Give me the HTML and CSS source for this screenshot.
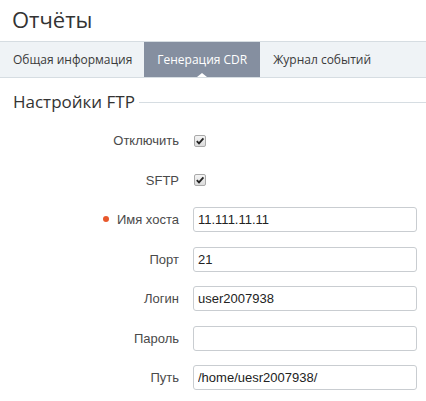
FILE: index.html
```html
<!DOCTYPE html>
<html lang="ru">
<head>
  <meta charset="UTF-8">
  <meta name="viewport" content="width=device-width, initial-scale=1.0">
  <title>Отчёты</title>
  <link rel="stylesheet" href="styles.css">
</head>
<body>
  <h1 class="page-title">Отчёты</h1>

  <nav class="tabs">
    <a href="#" class="tab">Общая информация</a>
    <a href="#" class="tab active">Генерация CDR</a>
    <a href="#" class="tab">Журнал событий</a>
  </nav>

  <section class="ftp">
    <div class="group-title">
      <span>Настройки FTP</span>
      <span class="rule"></span>
    </div>

    <form class="form">
      <label class="label">Отключить</label>
      <span class="check"><svg viewBox="0 0 12 12" width="12" height="12"><path d="M2.8 6.2 L5 8.4 L9.4 3.4" fill="none" stroke="#222" stroke-width="1.8"/></svg></span>

      <label class="label">SFTP</label>
      <span class="check"><svg viewBox="0 0 12 12" width="12" height="12"><path d="M2.8 6.2 L5 8.4 L9.4 3.4" fill="none" stroke="#222" stroke-width="1.8"/></svg></span>

      <label class="label required">Имя хоста</label>
      <input class="field" type="text" value="11.111.11.11">

      <label class="label">Порт</label>
      <input class="field" type="text" value="21">

      <label class="label">Логин</label>
      <input class="field" type="text" value="user2007938">

      <label class="label">Пароль</label>
      <input class="field" type="password" value="">

      <label class="label">Путь</label>
      <input class="field" type="text" value="/home/uesr2007938/">
    </form>
  </section>
</body>
</html>
```

FILE: styles.css
```css
:root {
  --text-color: #333;
  --tab-bg: #eff3f6;
  --tab-active: #858fa0;
  --line-color: #d6dde2;
  --input-border: #c9cdd1;
  --required: #e8582c;
}

* {
  margin: 0;
  padding: 0;
  box-sizing: border-box;
}

body {
  background: #fff;
  color: var(--text-color);
  font-family: 'Open Sans', 'Noto Sans', sans-serif;
}

.page-title {
  height: 41px;
  padding: 4px 0 0 12px;
  font-size: 22px;
  font-weight: 400;
  line-height: 30px;
  color: #333;
}

/* tab strip */
.tabs {
  display: flex;
  height: 37px;
  background: var(--tab-bg);
  border-top: 1px solid var(--line-color);
  border-bottom: 1px solid var(--line-color);
}

.tab {
  position: relative;
  padding: 0 12px 0 13px;
  font-size: 12px;
  line-height: 35px;
  color: #3a3a3a;
  text-decoration: none;
}

.tab.active {
  background: var(--tab-active);
  color: #fff;
  padding: 0 13px;
}

.tab.active::after {
  content: '';
  position: absolute;
  left: 50%;
  bottom: 0;
  margin-left: -5px;
  border: 5px solid transparent;
  border-bottom: 4px solid #fff;
  border-top: 0;
}

/* group heading with trailing rule */
.group-title {
  display: flex;
  align-items: center;
  gap: 4px;
  padding: 12px 0 0 13px;
  font-size: 17px;
  line-height: 24px;
  color: #333;
}

.rule {
  flex: 1;
  height: 1px;
  background: var(--line-color);
  margin-top: 1px;
}

.form {
  display: grid;
  grid-template-columns: 179px 224px;
  grid-auto-rows: 25px;
  column-gap: 14px;
  row-gap: 14.5px;
  align-items: center;
  margin-top: 14px;
  font-family: 'Liberation Sans', Arial, sans-serif;
  font-size: 13px;
}

.label {
  justify-self: end;
  color: #4a4a4a;
}

.required::before {
  content: '';
  display: inline-block;
  width: 6px;
  height: 6px;
  border-radius: 50%;
  background: var(--required);
  margin-right: 8px;
  vertical-align: 2px;
}

.check {
  display: flex;
  align-items: center;
  justify-content: center;
  width: 12px;
  height: 12px;
  margin-left: 1px;
  border: 1px solid #a9a9a9;
  border-radius: 2px;
  background: linear-gradient(#f4f4f4, #dcdcdc);
}

.check svg {
  display: block;
  margin: -1px;
}

.field {
  height: 25px;
  padding: 0 4px;
  border: 1px solid var(--input-border);
  border-radius: 3px;
  font-family: 'Liberation Sans', Arial, sans-serif;
  font-size: 13px;
  color: #222;
  outline: none;
}
```
